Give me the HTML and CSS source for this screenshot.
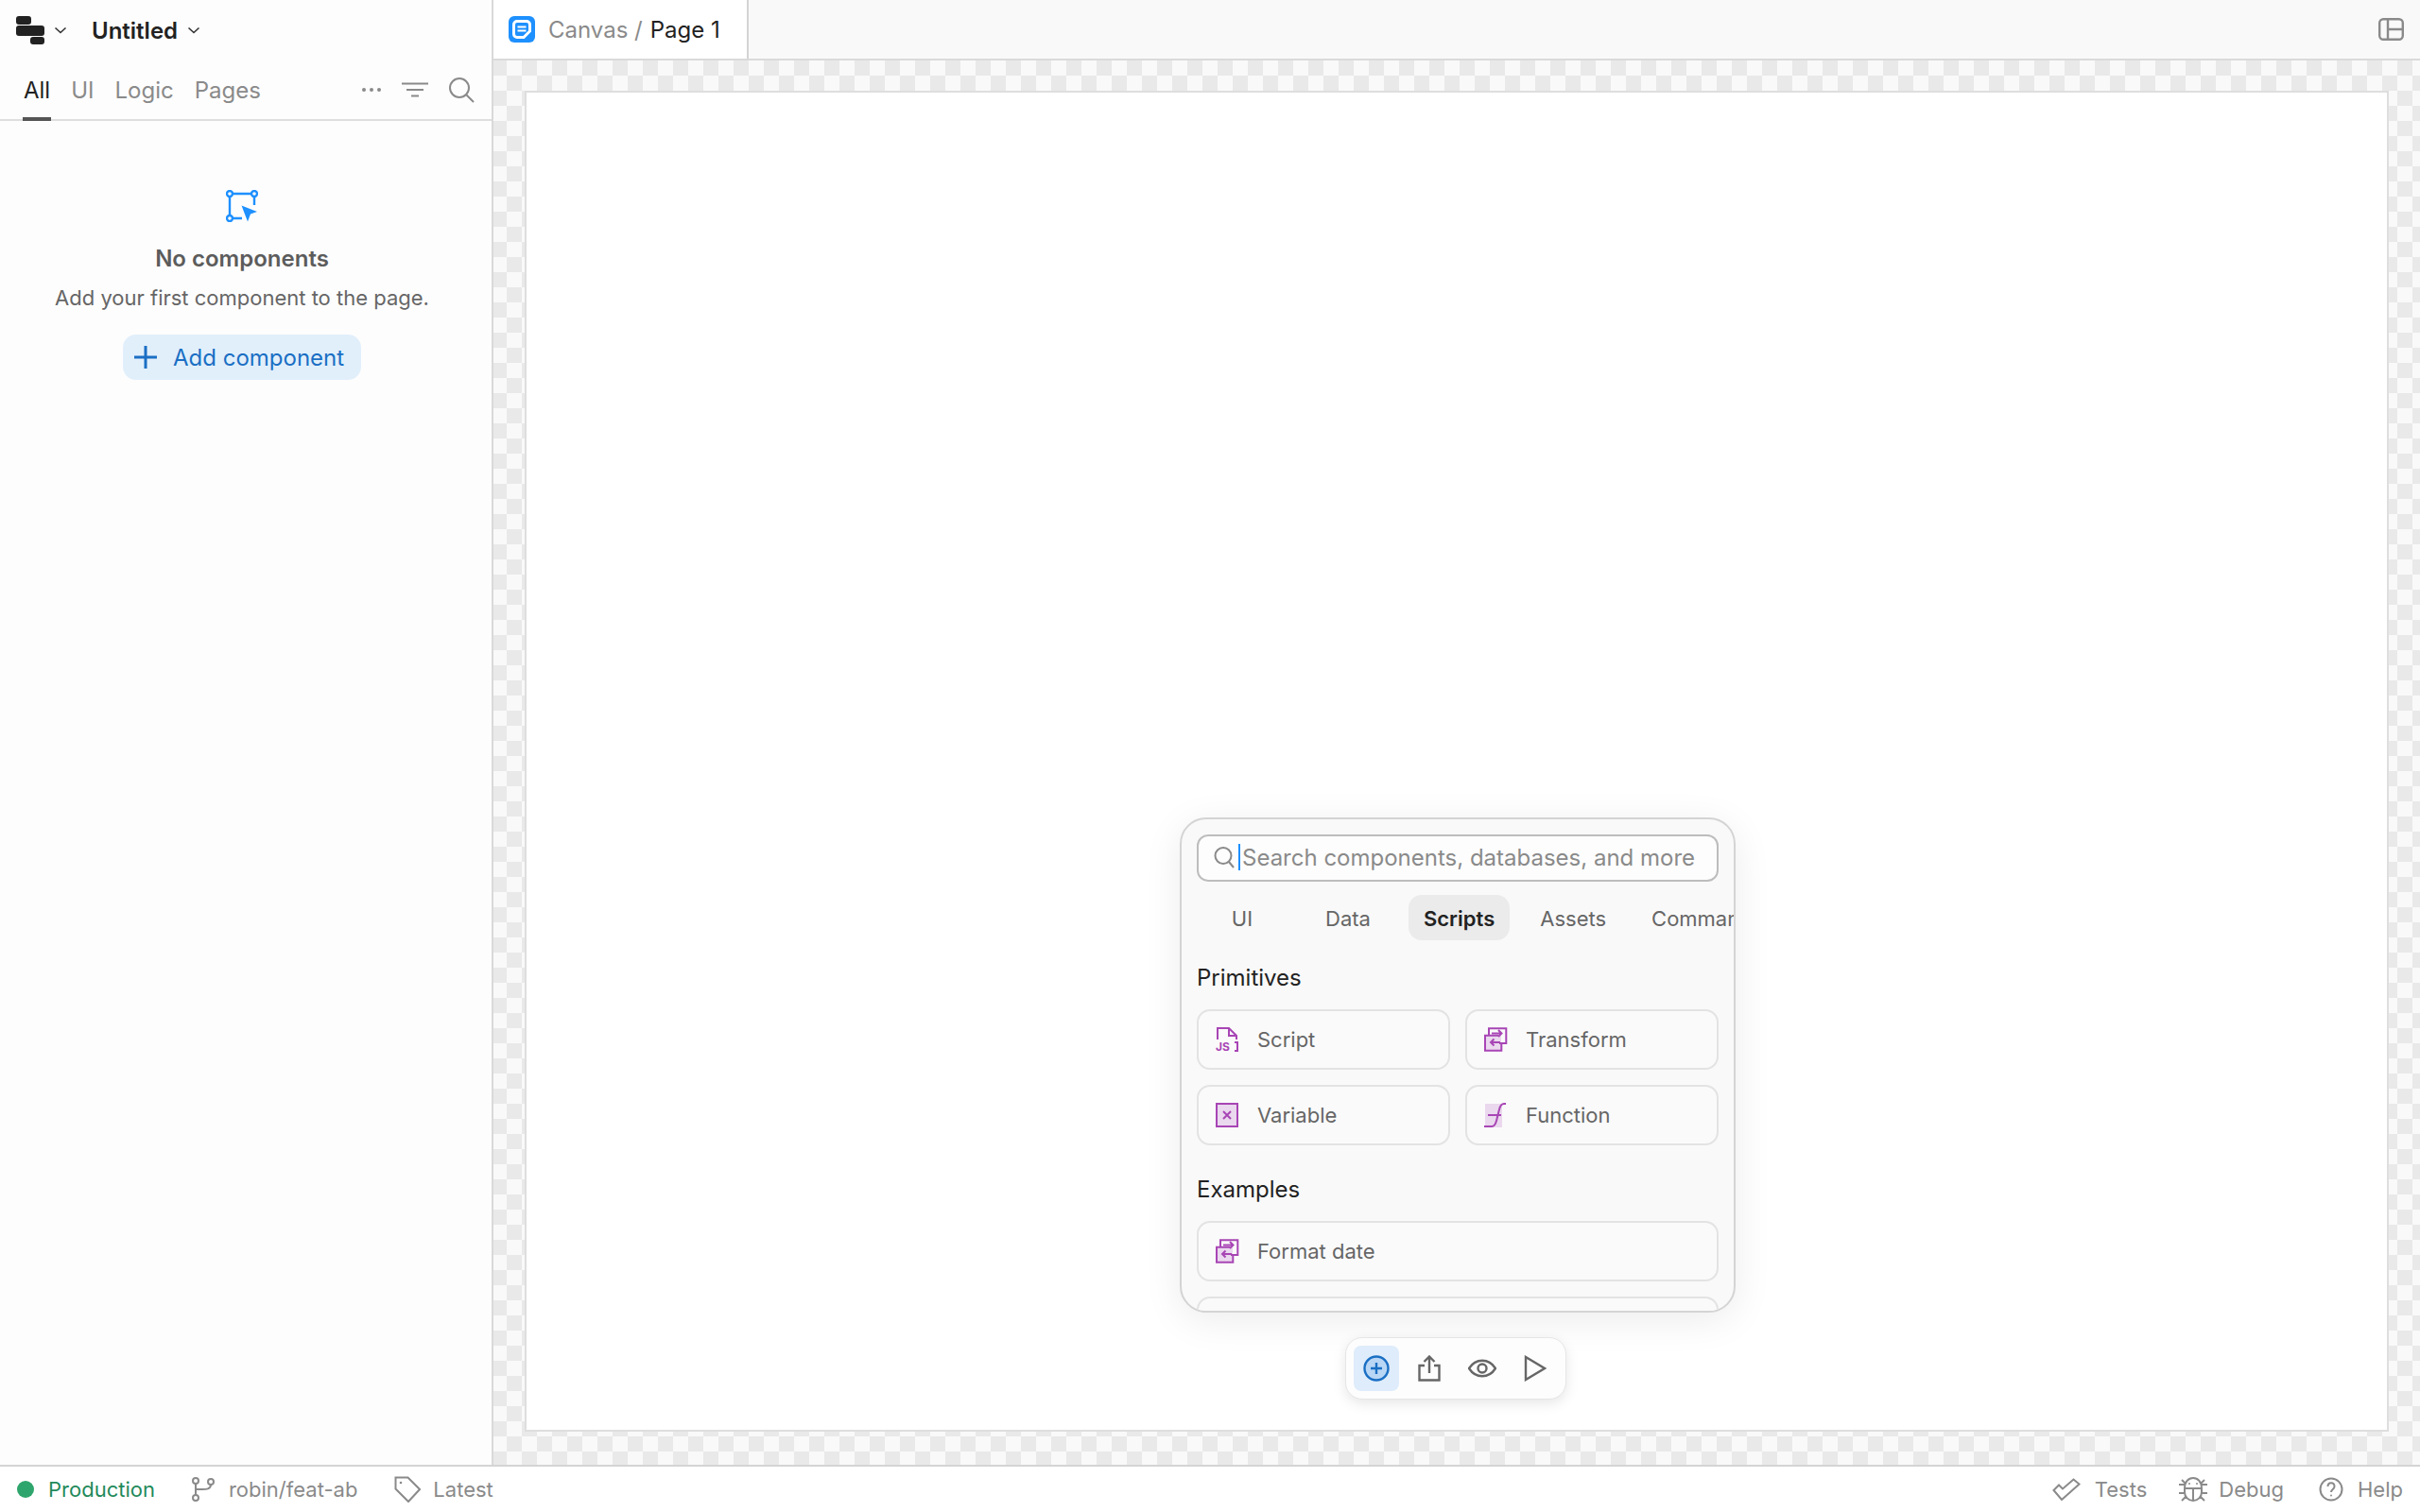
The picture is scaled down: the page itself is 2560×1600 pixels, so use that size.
FILE: index.html
```html
<!DOCTYPE html>
<html lang="en">
<head>
    <meta charset="UTF-8">
    <title>Untitled - Canvas</title>
    <link rel="stylesheet" href="styles.css">
</head>
<body>
    <div class="app">
        <div class="main">
            <aside class="sidebar">
                <div class="app-header">
                    <svg class="logo" width="30" height="30" viewBox="0 0 30 30"><rect x="0" y="0" width="16" height="9" rx="3"/><rect x="0" y="10" width="30" height="11" rx="3"/><rect x="15" y="22" width="15" height="8" rx="3"/></svg>
                    <svg class="chevron chevron-logo" width="14" height="8" viewBox="0 0 14 8"><path d="M1.5 1.5 7 6.5l5.5-5"/></svg>
                    <span class="app-title">Untitled</span>
                    <svg class="chevron" width="14" height="8" viewBox="0 0 14 8"><path d="M1.5 1.5 7 6.5l5.5-5"/></svg>
                </div>
                <div class="side-tabs">
                    <a class="side-tab active">All</a>
                    <a class="side-tab">UI</a>
                    <a class="side-tab">Logic</a>
                    <a class="side-tab">Pages</a>
                    <div class="side-actions">
                        <svg width="22" height="6" viewBox="0 0 22 6"><circle cx="3" cy="3" r="2"/><circle cx="11" cy="3" r="2"/><circle cx="19" cy="3" r="2"/></svg>
                        <svg class="stroke" width="28" height="16" viewBox="0 0 28 16"><path d="M0 1.500h28M5 8h18M10 14.500h8"/></svg>
                        <svg class="stroke" width="28" height="28" viewBox="0 0 28 28"><circle cx="12" cy="12" r="10"/><path d="M19.500 19.500 27 27"/></svg>
                    </div>
                </div>
                <div class="empty">
                    <svg class="empty-icon" width="34" height="34" viewBox="0 0 34 34"><path d="M7 4h20M4 7v20M7 30h10M30 7v9"/><circle cx="4" cy="4" r="3"/><circle cx="30" cy="4" r="3"/><circle cx="4" cy="30" r="3"/><path class="fill" d="M16.500 16.500 33 23l-7 2.500-3 8z"/></svg>
                    <div class="empty-title">No components</div>
                    <div class="empty-text">Add your first component to the page.</div>
                    <button class="add-btn">
                        <svg width="24" height="24" viewBox="0 0 24 24"><path d="M12 0v24M0 12h24"/></svg>
                        Add component
                    </button>
                </div>
            </aside>

            <section class="workspace">
                <div class="topbar">
                    <div class="page-tab">
                        <svg width="28" height="28" viewBox="0 0 28 28"><rect width="28" height="28" rx="6" fill="#1e90ff"/><path d="M9 5.500h10a3.500 3.500 0 0 1 3.500 3.500v7L16 22.500H9A3.500 3.500 0 0 1 5.500 19V9A3.500 3.500 0 0 1 9 5.500z" fill="none" stroke="#fff" stroke-width="3"/><path d="M9.500 11.500h9M9.500 15.500h9" stroke="#fff" stroke-width="2.200"/></svg>
                        <span class="crumb">Canvas /</span>
                        <span class="crumb-current">Page 1</span>
                    </div>
                    <svg class="layout-icon" width="27" height="24" viewBox="0 0 27 24"><rect x="1.200" y="1.200" width="24.600" height="21.600" rx="4"/><path d="M10 1v22M10 12h16"/></svg>
                </div>
                <div class="canvas">
                    <div class="stage">
                        <div class="overlay">
                            <div class="picker">
                                <div class="picker-search">
                                    <svg width="22" height="24" viewBox="0 0 22 24"><circle cx="10" cy="10.500" r="8.500"/><path d="M16 17l5 6"/></svg>
                                    <span class="caret"></span>
                                    <span class="placeholder">Search components, databases, and more</span>
                                </div>
                                <div class="picker-tabs">
                                    <span class="picker-tab">UI</span>
                                    <span class="picker-tab">Data</span>
                                    <span class="picker-tab active">Scripts</span>
                                    <span class="picker-tab">Assets</span>
                                    <span class="picker-tab">Commands</span>
                                </div>
                                <div class="picker-heading">Primitives</div>
                                <div class="card-grid">
                                    <div class="card">
                                        <svg class="card-icon" width="24" height="26" viewBox="0 0 24 26"><path d="M2 13V1h12l8 8v4M14 1v8h8M20 16h3v9h-3"/><text class="js" x="0" y="25">JS</text></svg>
                                        Script
                                    </div>
                                    <div class="card">
                                        <svg class="card-icon" width="24" height="26" viewBox="0 0 24 26"><rect class="tint-flat" x="1" y="9" width="17" height="16"/><path d="M5 8.700V1.300h18.300V17H16M15 8.700H1v16h17.300V17"/><path d="M8 6.500h10M15 3l3.500 3.500L15 10M17 16H7M10.500 12.500 7 16l3.500 3.500"/></svg>
                                        Transform
                                    </div>
                                    <div class="card">
                                        <svg class="card-icon" width="24" height="26" viewBox="0 0 24 26"><rect class="tint" x="1" y="1" width="22" height="24"/><path d="m8 9 8 8M16 9l-8 8"/></svg>
                                        Variable
                                    </div>
                                    <div class="card">
                                        <svg class="card-icon" width="24" height="26" viewBox="0 0 24 26"><rect class="tint-flat" x="1" y="1" width="18" height="25"/><path d="M23 1h-2c-3 0-4 2-5 6l-3 12c-1 4-2 6-5 6H0M4 13h14"/></svg>
                                        Function
                                    </div>
                                </div>
                                <div class="picker-heading heading-next">Examples</div>
                                <div class="card-grid single">
                                    <div class="card">
                                        <svg class="card-icon" width="24" height="26" viewBox="0 0 24 26"><rect class="tint-flat" x="1" y="9" width="17" height="16"/><path d="M5 8.700V1.300h18.300V17H16M15 8.700H1v16h17.300V17"/><path d="M8 6.500h10M15 3l3.500 3.500L15 10M17 16H7M10.500 12.500 7 16l3.500 3.500"/></svg>
                                        Format date
                                    </div>
                                    <div class="card"></div>
                                </div>
                            </div>
                            <div class="toolbar">
                                <button class="tool active">
                                    <svg width="28" height="28" viewBox="0 0 28 28"><circle class="tint-blue" cx="14" cy="14" r="12.500"/><path d="M14 8v12M8 14h12"/></svg>
                                </button>
                                <button class="tool">
                                    <svg width="24" height="28" viewBox="0 0 24 28"><path d="M7 11H1.500v15.500h21V11H17M12 19V1.500M6.500 7 12 1.500 17.500 7"/></svg>
                                </button>
                                <button class="tool">
                                    <svg width="30" height="20" viewBox="0 0 30 20"><path d="M1 10c7-11 21-11 28 0-7 11-21 11-28 0z"/><circle cx="15" cy="10" r="4.500"/></svg>
                                </button>
                                <button class="tool">
                                    <svg width="24" height="28" viewBox="0 0 24 28"><path d="M2 2v24l20-12z"/></svg>
                                </button>
                            </div>
                        </div>
                    </div>
                </div>
            </section>
        </div>

        <footer class="statusbar">
            <div class="status-group">
                <span class="status-item status-env"><i class="env-dot"></i>Production</span>
                <span class="status-item">
                    <svg width="24" height="26" viewBox="0 0 24 26"><circle cx="4" cy="4" r="3"/><circle cx="20" cy="5" r="3"/><circle cx="4" cy="22" r="3"/><path d="M4 7v12M20 8c0 5-5 5-9 5H4"/></svg>
                    robin/feat-ab
                </span>
                <span class="status-item status-tag">
                    <svg width="28" height="28" viewBox="0 0 28 28"><path d="M1.500 1.500h13L27 14 15 27 1.500 13.500z"/><circle class="fill-dot" cx="7" cy="7" r="1.300"/></svg>
                    Latest
                </span>
            </div>
            <div class="status-group status-right">
                <span class="status-item">
                    <svg width="30" height="24" viewBox="0 0 30 24"><path d="M1.500 13 7 7.500l4 4L22.500 1.500l6 5L10 23z"/></svg>
                    Tests
                </span>
                <span class="status-item status-debug">
                    <svg width="30" height="28" viewBox="0 0 30 28"><path d="M6 13c0-7 4-11 9-11s9 4 9 11v4c0 5-4 9-9 9s-9-4-9-9zM6 13h18M15 13v13M0 9h6M24 9h6M0 18h6M24 18h6M3 4l4 4M27 4l-4 4M3 26l4-4M27 26l-4-4"/><circle class="fill-dot" cx="11" cy="8" r="1"/><circle class="fill-dot" cx="19" cy="8" r="1"/></svg>
                    Debug
                </span>
                <span class="status-item">
                    <svg width="26" height="26" viewBox="0 0 26 26"><circle cx="13" cy="13" r="11.500"/><path d="M9.500 10c0-5 7-5 7 0 0 3-3.500 3-3.500 6"/><circle class="fill-dot" cx="13" cy="19.500" r="1"/></svg>
                    Help
                </span>
            </div>
        </footer>
    </div>
</body>
</html>
```

FILE: styles.css
```css
* {
    box-sizing: border-box;
}

body {
    margin: 0;
    font-family: Inter, "Liberation Sans", sans-serif;
    font-size: 24px;
    color: #555;
    background: #fff;
}

svg {
    display: block;
    flex-shrink: 0;
}

.app {
    height: 1600px;
    display: flex;
    flex-direction: column;
}

.main {
    flex: 1;
    display: flex;
    min-height: 0;
}

/* left panel */
.sidebar {
    width: 522px;
    background: #fdfdfd;
    border-right: 2px solid #d9d9d9;
}

.app-header {
    height: 64px;
    display: flex;
    align-items: center;
    padding-left: 17px;
}

.logo {
    fill: #222;
}

.chevron {
    fill: none;
    stroke: #333;
    stroke-width: 1.6;
    margin-left: 10px;
}

.chevron-logo {
    margin-left: 10px;
    margin-right: 26px;
}

.app-title {
    font-size: 24px;
    font-weight: 600;
    color: #222;
}

.side-tabs {
    height: 64px;
    display: flex;
    align-items: center;
    padding: 0 26px 0 25px;
    gap: 22px;
    border-bottom: 2px solid #dedede;
    position: relative;
}

.side-tab {
    color: #8a8a8a;
    height: 62px;
    line-height: 64px;
    position: relative;
}

.side-tab.active {
    color: #222;
}

.side-tab.active::after {
    content: "";
    position: absolute;
    left: -1px;
    right: -1px;
    bottom: -2px;
    height: 4px;
    background: #555;
}

.side-actions {
    margin-left: auto;
    margin-right: -8px;
    display: flex;
    align-items: center;
    gap: 21px;
    fill: #8a8a8a;
}

.side-actions .stroke {
    fill: none;
    stroke: #8a8a8a;
    stroke-width: 2;
}

.empty {
    display: flex;
    flex-direction: column;
    align-items: center;
    padding: 73px 8px 0 0;
}

.empty-icon {
    fill: none;
    stroke: #1e90ff;
    stroke-width: 2.400;
}

.empty-icon .fill {
    fill: #1e90ff;
    stroke: none;
}

.empty-title {
    margin-top: 23px;
    font-weight: 600;
    color: #5c5c5c;
    line-height: 32px;
}

.empty-text {
    margin-top: 9px;
    font-size: 22px;
    line-height: 32px;
    color: #666;
}

.add-btn {
    margin-top: 23px;
    height: 48px;
    width: 252px;
    display: flex;
    align-items: center;
    gap: 17px;
    padding: 0 12px;
    border: none;
    border-radius: 14px;
    background: #e1effb;
    color: #1a6fc4;
    font: inherit;
}

.add-btn svg {
    fill: none;
    stroke: #1a6fc4;
    stroke-width: 3;
}

/* top bar and canvas */
.workspace {
    flex: 1;
    display: flex;
    flex-direction: column;
    min-width: 0;
}

.topbar {
    height: 64px;
    display: flex;
    align-items: center;
    justify-content: space-between;
    background: #f9f9f9;
    border-bottom: 2px solid #dadada;
    padding-right: 17px;
}

.page-tab {
    height: 62px;
    width: 270px;
    display: flex;
    align-items: center;
    gap: 15px;
    padding-left: 16px;
    background: #fff;
    border-right: 2px solid #d4d4d4;
}

.crumb {
    color: #8a8a8a;
    margin-left: -1px;
}

.crumb-current {
    color: #222;
    margin-left: -7px;
}

.layout-icon {
    fill: none;
    stroke: #8a8a8a;
    stroke-width: 2.400;
}

.canvas {
    flex: 1;
    min-height: 0;
    padding: 32px 33px 35px 33px;
    background: conic-gradient(#f9f9f9 25%, #e9e9e9 0 50%, #f9f9f9 0 75%, #e9e9e9 0) -2px 0 / 32px 32px;
}

.stage {
    height: 100%;
    position: relative;
    background: #fff;
    border: 2px solid #dedede;
}

.overlay {
    position: absolute;
    left: 0;
    right: 0;
    bottom: 32px;
    display: flex;
    flex-direction: column;
    align-items: center;
    gap: 26px;
}

/* add component popup */
.picker {
    width: 588px;
    height: 524px;
    overflow: hidden;
    padding: 16px 16px 0 16px;
    background: #f9f9f9;
    border: 2px solid #d4d4d4;
    border-radius: 28px;
    box-shadow: 0 8px 40px rgba(0, 0, 0, 0.08);
    margin-left: 2px;
}

.picker-search {
    height: 50px;
    display: flex;
    align-items: center;
    padding: 0 0 2px 16px;
    background: #fdfdfd;
    border: 2px solid #bdbdbd;
    border-radius: 12px;
}

.picker-search svg {
    fill: none;
    stroke: #8a8a8a;
    stroke-width: 2;
}

.caret {
    width: 2px;
    height: 28px;
    margin-left: 4px;
    background: #1e90ff;
}

.placeholder {
    margin-left: 2px;
    color: #8a8a8a;
    white-space: nowrap;
}

.picker-tabs {
    margin-top: 14px;
    display: flex;
    gap: 16px;
}

.picker-tab {
    flex-shrink: 0;
    min-width: 96px;
    height: 48px;
    line-height: 50px;
    padding: 0 16px;
    text-align: center;
    font-size: 22px;
    color: #666;
    border-radius: 14px;
    white-space: nowrap;
}

.picker-tab.active {
    background: #ebebeb;
    color: #222;
    font-weight: 600;
}

.picker-heading {
    margin-top: 24px;
    margin-bottom: 17px;
    line-height: 32px;
    color: #222;
}

.heading-next {
    margin-top: 31px;
}

.card-grid {
    display: grid;
    grid-template-columns: 1fr 1fr;
    gap: 16px;
}

.card-grid.single {
    grid-template-columns: 1fr;
}

.card {
    height: 64px;
    display: flex;
    align-items: center;
    gap: 20px;
    padding-left: 18px;
    background: #fafafa;
    border: 2px solid #e3e3e3;
    border-radius: 14px;
    font-size: 22px;
    color: #666;
}

.card-icon {
    fill: none;
    stroke: #a845b5;
    stroke-width: 2;
    overflow: visible;
}

.card-icon .js {
    fill: #a845b5;
    stroke: none;
    font-size: 12px;
    font-weight: 700;
}

.card-icon .tint {
    fill: #ead8ee;
}

.card-icon .tint-flat {
    fill: #ead8ee;
    stroke: none;
}

/* floating tools */
.toolbar {
    display: flex;
    gap: 8px;
    padding: 8px;
    margin-right: 2px;
    background: #fdfdfd;
    border: 1px solid #e6e6e6;
    border-radius: 18px;
    box-shadow: 0 4px 14px rgba(0, 0, 0, 0.1);
}

.tool {
    width: 48px;
    height: 48px;
    display: flex;
    align-items: center;
    justify-content: center;
    padding: 0;
    border: none;
    border-radius: 8px;
    background: none;
}

.tool svg {
    fill: none;
    stroke: #666;
    stroke-width: 2.400;
}

.tool.active {
    background: #deecfb;
}

.tool.active svg {
    stroke: #1a6fc4;
}

.tint-blue {
    fill: #b9d6f5;
}

/* status bar */
.statusbar {
    height: 50px;
    display: flex;
    align-items: center;
    justify-content: space-between;
    background: #fff;
    border-top: 2px solid #d4d4d4;
    padding: 0 18px;
    font-size: 22px;
    color: #8a8a8a;
}

.status-group {
    display: flex;
    align-items: center;
    gap: 39px;
}

.status-item {
    display: flex;
    align-items: center;
    gap: 15px;
}

.status-tag {
    gap: 13px;
}

.status-debug {
    gap: 12px;
    margin-right: 3px;
}

.status-item svg {
    fill: none;
    stroke: #8a8a8a;
    stroke-width: 2;
}

.status-item svg .fill-dot {
    fill: #8a8a8a;
    stroke: none;
}

.status-env {
    color: #1f8a5b;
}

.env-dot {
    width: 18px;
    height: 18px;
    border-radius: 50%;
    background: #2ea56c;
}

.status-right {
    gap: 34px;
}
```
